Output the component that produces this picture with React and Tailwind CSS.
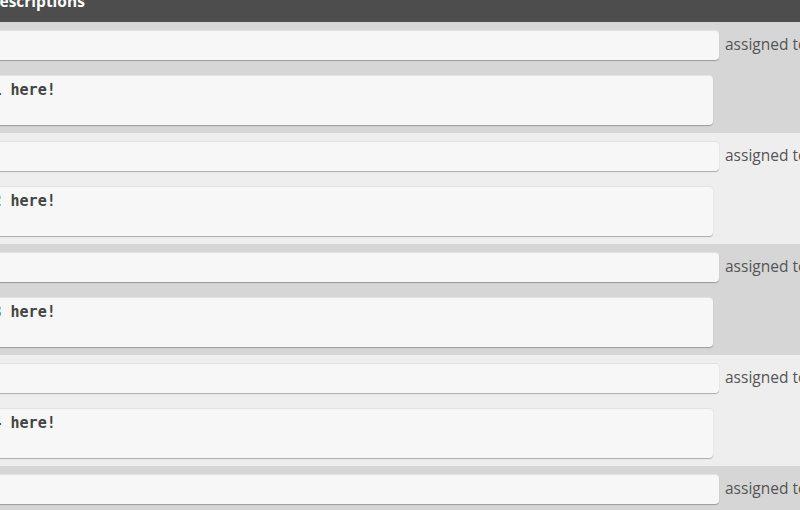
export default function App() {
  const rows = [1, 2, 3, 4, 5];
  return (
    <div className="w-[800px] h-[510px] overflow-hidden bg-[#eeeeee]" style={{ fontFamily: '"Open Sans", "Liberation Sans", sans-serif' }}>
      <div className="h-[22px] bg-[#4d4d4d] overflow-hidden">
        <div className="-mt-[9px] -ml-[12px] text-[15.5px] leading-[20px] font-bold text-white whitespace-nowrap">Descriptions</div>
      </div>
      {rows.map((n) => (
        <div key={n} className={`h-[111px] pt-[8px] ${n % 2 === 1 ? "bg-[#d6d6d6]" : "bg-[#eeeeee]"}`}>
          <div className="flex items-center">
            <div className="-ml-[200px] w-[919px] shrink-0 h-[30px] rounded-[4px] bg-[#f7f7f7] border-t border-[#e2e2e2] shadow-[0_1px_1px_rgba(0,0,0,0.28)]" />
            <div className="ml-[6px] whitespace-nowrap text-[15.5px] text-[#555555]">assigned to</div>
          </div>
          <div className="mt-[15px] -ml-[200px] w-[913px] h-[50px] rounded-[4px] bg-[#f7f7f7] border-t border-[#e2e2e2] shadow-[0_1px_1px_rgba(0,0,0,0.28)] pt-[5px] pl-[48px]">
            <div className="text-[15px] leading-[18px] font-bold text-[#444444] whitespace-nowrap" style={{ fontFamily: '"DejaVu Sans Mono", "Liberation Mono", monospace' }}>
              Put description {n} here!
            </div>
          </div>
        </div>
      ))}
    </div>
  );
}
